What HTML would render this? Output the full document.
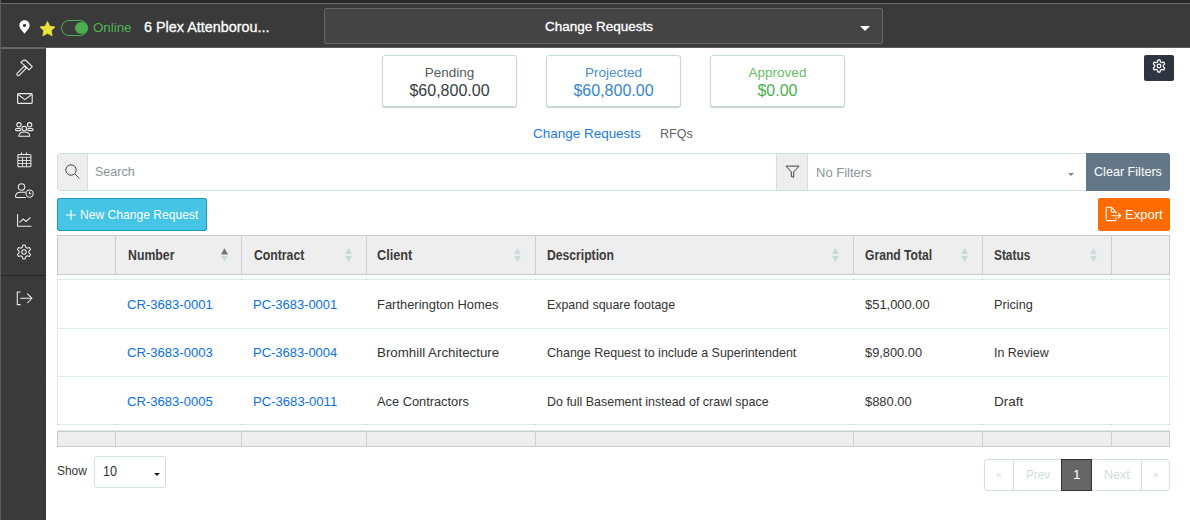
<!DOCTYPE html>
<html><head><meta charset="utf-8">
<style>
*{box-sizing:border-box;margin:0;padding:0}
html,body{width:1190px;height:520px;overflow:hidden;background:#fff;font-family:"Liberation Sans",sans-serif;position:relative}
.a{position:absolute}
.t{position:absolute;line-height:1;white-space:nowrap;transform-origin:0 0}
svg{position:absolute;overflow:visible}
.card{position:absolute;top:55px;width:135px;height:52px;border:1px solid #c2dcdd;border-radius:3px;box-shadow:0 1px 1px rgba(0,0,0,.2);background:#fff}
.card .l{position:absolute;left:0;right:0;text-align:center;font-size:13.5px;line-height:1;top:10px}
.card .v{position:absolute;left:0;right:0;text-align:center;font-size:16px;line-height:1;top:27px}
.th{position:absolute;top:0;height:39px;border-left:1px solid #cfcfcf}
.hd{font-weight:bold;font-size:12.3px;color:#333;top:250px}
.cell{font-size:13px;color:#333}
.lnk{color:#1f7ad8}
.sort{position:absolute;width:7px;height:16px}
</style></head><body>

<!-- top header -->
<div class="a" style="left:0;top:0;width:1190px;height:3px;background:#282828"></div>
<div class="a" style="left:0;top:3px;width:1190px;height:1px;background:#6a6a6a"></div>
<div class="a" style="left:0;top:4px;width:1190px;height:43px;background:#3a3a3a;border-bottom:1px solid #363636"></div>
<div class="a" style="left:0;top:47px;width:1190px;height:1px;background:#5c5c5c"></div>

<!-- pin -->
<svg style="left:19px;top:20px" width="11" height="14" viewBox="0 0 11 14">
  <path d="M5.5 0.3C2.6 0.3 0.4 2.5 0.4 5.3c0 3 3.2 6.2 5.1 8.5c1.9-2.3 5.1-5.5 5.1-8.5C10.6 2.5 8.4 0.3 5.5 0.3z" fill="#fff"/>
  <circle cx="5.5" cy="5.4" r="1.6" fill="#3a3a3a"/>
</svg>
<!-- star -->
<svg style="left:40px;top:21px" width="15" height="15" viewBox="0 0 15 15">
  <path d="M7.50 0.50L9.79 5.24L15.01 5.96L11.21 9.61L12.14 14.79L7.50 12.30L2.86 14.79L3.79 9.61L-0.01 5.96L5.21 5.24z" fill="#ede23c" stroke="#ede23c" stroke-width="0.8" stroke-linejoin="round"/>
</svg>
<!-- toggle -->
<div class="a" style="left:61px;top:20px;width:27px;height:16px;border:1px solid #4cae4f;border-radius:8px"></div>
<div class="a" style="left:75px;top:22px;width:13px;height:12px;border-radius:50%;background:#4cae4f"></div>
<div class="t" style="left:93px;top:21px;font-size:13.3px;color:#4fb552">Online</div>
<div class="t" style="left:144px;top:20px;font-size:14.4px;color:#fff;-webkit-text-stroke:0.3px #fff">6 Plex Attenborou...</div>

<!-- dropdown -->
<div class="a" style="left:324px;top:8px;width:559px;height:36px;background:#444;border:1px solid #666;border-radius:2px"></div>
<div class="t" style="left:545px;top:20px;font-size:13.5px;color:#fff;-webkit-text-stroke:0.3px #fff">Change Requests</div>
<svg style="left:860px;top:26px" width="10" height="5" viewBox="0 0 10 5"><path d="M0 0H10L5 5z" fill="#fff"/></svg>

<!-- sidebar -->
<div class="a" style="left:0;top:47px;width:46px;height:473px;background:#3a3a3a;border-top:2px solid #676767;border-right:1px solid #363636"></div>
<div class="a" style="left:1px;top:275px;width:44px;height:1px;background:#262626"></div>

<!-- sidebar icons -->
<svg style="left:16px;top:59px" width="17" height="17" viewBox="0 0 17 17" fill="none" stroke="#eee" stroke-width="1.1" stroke-linejoin="round">
  <path d="M1.2 14.3L8.3 7.2 10.3 9.2 3.2 16.3C2.7 16.8 1.9 16.8 1.4 16.3L1.2 16.1C.7 15.6.7 14.8 1.2 14.3z"/>
  <path d="M4.9 3.3L7.2 1.5C8.4 .9 9.6 1.1 10.5 2L16.3 7.7 13.1 10.9 9.6 7.4z"/>
</svg>
<svg style="left:17px;top:93px" width="16" height="11" viewBox="0 0 16 11" fill="none" stroke="#eee" stroke-width="1.1">
  <rect x="0.6" y="0.6" width="14.6" height="9.8" rx="1"/>
  <path d="M0.8 1.2L7.9 6.6 15 1.2"/>
</svg>
<svg style="left:14px;top:120px" width="21" height="18" viewBox="0 0 21 18" fill="none" stroke="#eee" stroke-width="1.05">
  <circle cx="5" cy="4.8" r="2.2"/><circle cx="15.6" cy="4.8" r="2.2"/><circle cx="10.3" cy="8.6" r="2.3"/>
  <rect x="1.5" y="8.4" width="5.4" height="2.2" rx="1.1"/>
  <rect x="13.7" y="8.4" width="5.4" height="2.2" rx="1.1"/>
  <path d="M4.9 16.2C4.9 13.3 7.3 12 10.3 12S15.7 13.3 15.7 16.2z"/>
</svg>
<svg style="left:17px;top:152px" width="15" height="16" viewBox="0 0 15 16" fill="none" stroke="#eee" stroke-width="1.05">
  <rect x="0.9" y="2.4" width="13" height="12.4" rx="1"/>
  <path d="M0.9 5.3h13M0.9 8.5h13M0.9 11.5h13M5.5 5.3v9.5M9.5 5.3v9.5" stroke-width="0.85"/><path d="M4.5 0.5v2.8M9.5 0.5v2.8"/>
</svg>
<svg style="left:14px;top:182px" width="20" height="17" viewBox="0 0 20 17" fill="none" stroke="#eee" stroke-width="1.05">
  <circle cx="7.5" cy="5" r="3.3"/>
  <path d="M12 15.4H2.4C1.7 15.4 1.3 14.8 1.5 14.1 2.1 11.6 3.8 10.3 6 10.3H11.8"/>
  <circle cx="15.6" cy="11.6" r="3.6"/>
  <path d="M15.5 9.6V11.8H17.2"/>
</svg>
<svg style="left:16px;top:213px" width="17" height="15" viewBox="0 0 17 15" fill="none" stroke="#eee" stroke-width="1.05">
  <path d="M1.6 1V13.3H15.5"/>
  <path d="M3.5 9.3L7.3 6 10.1 8.5 14.5 4.3"/>
</svg>
<svg style="left:16px;top:244px" width="16" height="16" viewBox="0 0 16 16" fill="none" stroke="#eee" stroke-width="1.05" stroke-linejoin="round">
  <path d="M6.16 3.46L6.90 1.09L9.10 1.09L9.84 3.46A4.90 4.90 0 0 1 11.02 4.14L13.44 3.59L14.54 5.49L12.85 7.32A4.90 4.90 0 0 1 12.85 8.68L14.54 10.51L13.44 12.41L11.02 11.86A4.90 4.90 0 0 1 9.84 12.54L9.10 14.91L6.90 14.91L6.16 12.54A4.90 4.90 0 0 1 4.98 11.86L2.56 12.41L1.46 10.51L3.15 8.68A4.90 4.90 0 0 1 3.15 7.32L1.46 5.49L2.56 3.59L4.98 4.14A4.90 4.90 0 0 1 6.16 3.46z"/>
  <circle cx="8" cy="8" r="2.2"/>
</svg>
<svg style="left:16px;top:291px" width="17" height="15" viewBox="0 0 17 15" fill="none" stroke="#eee" stroke-width="1.05">
  <path d="M4.6 0.9H1.3V13.6H4.6"/>
  <path d="M4.3 7.3H15.6M11.3 2.6L15.9 7.3 11.3 12"/>
</svg>

<!-- gear button -->
<div class="a" style="left:1144px;top:55px;width:30px;height:26px;background:#2e3540;border-radius:2px"></div>
<svg style="left:1152px;top:59px" width="14" height="14" viewBox="0 0 16 16" fill="none" stroke="#fff" stroke-width="1.4" stroke-linejoin="round">
  <path d="M6.16 3.46L6.90 1.09L9.10 1.09L9.84 3.46A4.90 4.90 0 0 1 11.02 4.14L13.44 3.59L14.54 5.49L12.85 7.32A4.90 4.90 0 0 1 12.85 8.68L14.54 10.51L13.44 12.41L11.02 11.86A4.90 4.90 0 0 1 9.84 12.54L9.10 14.91L6.90 14.91L6.16 12.54A4.90 4.90 0 0 1 4.98 11.86L2.56 12.41L1.46 10.51L3.15 8.68A4.90 4.90 0 0 1 3.15 7.32L1.46 5.49L2.56 3.59L4.98 4.14A4.90 4.90 0 0 1 6.16 3.46z"/>
  <circle cx="8" cy="8" r="2.1"/>
</svg>

<!-- cards -->
<div class="card" style="left:382px"><div class="l" style="color:#525b60">Pending</div><div class="v" style="color:#363d42">$60,800.00</div></div>
<div class="card" style="left:546px"><div class="l" style="color:#4a90d0">Projected</div><div class="v" style="color:#3686c8">$60,800.00</div></div>
<div class="card" style="left:710px"><div class="l" style="color:#66bd66">Approved</div><div class="v" style="color:#4cb04e">$0.00</div></div>

<!-- tabs -->
<div class="t" style="left:532.80px;top:127px;font-size:13.50px;color:#1a7be6;transform:scaleX(0.9977)">Change Requests</div>
<div class="t" style="left:660.20px;top:127px;font-size:13.50px;color:#626262;transform:scaleX(0.9277)">RFQs</div>

<!-- search bar -->
<div class="a" style="left:57px;top:153px;width:1030px;height:38px;border:1px solid #cfe1e1;border-radius:3px 0 0 3px;background:#fff"></div>
<div class="a" style="left:58px;top:154px;width:30px;height:36px;background:#eee;border-right:1px solid #cfe1e1"></div>
<svg style="left:65px;top:164px" width="15" height="15" viewBox="0 0 15 15" fill="none" stroke="#4a4a4a" stroke-width="1">
  <circle cx="6" cy="6" r="5.2"/><path d="M9.8 9.8l4.5 4.5"/>
</svg>
<div class="t" style="left:95px;top:166px;font-size:12.5px;color:#869494">Search</div>
<div class="a" style="left:776px;top:154px;width:32px;height:36px;background:#eee;border-left:1px solid #cfe1e1;border-right:1px solid #cfe1e1"></div>
<svg style="left:785px;top:165px" width="15" height="14" viewBox="0 0 15 14" fill="none" stroke="#444" stroke-width="1" stroke-linejoin="round">
  <path d="M0.9 1.1H14.1L8.7 6.9V12.3L6.3 11.6V6.9Z"/>
</svg>
<div class="t" style="left:816px;top:166px;font-size:13px;color:#8c9696">No Filters</div>
<svg style="left:1068px;top:173px" width="6" height="3" viewBox="0 0 6 3"><path d="M0 0H6L3 3z" fill="#888"/></svg>
<div class="a" style="left:1086px;top:153px;width:84px;height:38px;background:#637789;border-radius:0 3px 3px 0"></div>
<div class="t" style="left:1094px;top:166px;font-size:12.6px;color:#fff">Clear Filters</div>

<!-- buttons -->
<div class="a" style="left:57px;top:198px;width:150px;height:33px;background:#45c4e6;border:1px solid #1d9ac0;border-radius:2px"></div>
<svg style="left:66px;top:210px" width="10" height="10" viewBox="0 0 10 10"><path d="M5 0V10M0 5H10" stroke="#fff" stroke-width="1.15"/></svg>
<div class="t" style="left:80px;top:209px;font-size:12.1px;color:#fff">New Change Request</div>
<div class="a" style="left:1098px;top:198px;width:72px;height:33px;background:#ff6b00;border-radius:2px"></div>
<svg style="left:1105px;top:206px" width="17" height="16" viewBox="0 0 17 16" fill="none" stroke="#fff" stroke-width="1.1" stroke-linejoin="round">
  <path d="M11 7.6V6.1L6.3 1.2H2.3C1.7 1.2 1.2 1.7 1.2 2.3V13.5C1.2 14.1 1.7 14.6 2.3 14.6H9.9C10.5 14.6 11 14.1 11 13.5V11.6"/>
  <path d="M6.3 1.2V5.1C6.3 5.7 6.7 6.1 7.3 6.1H11"/>
  <path d="M6.3 9.7H15.8M13.1 7L15.8 9.7 13.1 12.4"/>
</svg>
<div class="t" style="left:1125px;top:208px;font-size:13px;color:#fff">Export</div>

<!-- table header -->
<div class="a" style="left:57px;top:235px;width:1113px;height:40px;background:#eee;border:1px solid #cbcbcb"></div>
<div class="a" style="left:115px;top:236px;width:1px;height:38px;background:#cfcfcf"></div>
<div class="a" style="left:241px;top:236px;width:1px;height:38px;background:#cfcfcf"></div>
<div class="a" style="left:366px;top:236px;width:1px;height:38px;background:#cfcfcf"></div>
<div class="a" style="left:535px;top:236px;width:1px;height:38px;background:#cfcfcf"></div>
<div class="a" style="left:853px;top:236px;width:1px;height:38px;background:#cfcfcf"></div>
<div class="a" style="left:982px;top:236px;width:1px;height:38px;background:#cfcfcf"></div>
<div class="a" style="left:1111px;top:236px;width:1px;height:38px;background:#cfcfcf"></div>

<div class="t" style="left:127.80px;top:248px;font-size:14.00px;color:#3b3b3b;transform:scaleX(0.8790);font-weight:bold">Number</div>
<div class="t" style="left:253.70px;top:248px;font-size:14.00px;color:#3b3b3b;transform:scaleX(0.8740);font-weight:bold">Contract</div>
<div class="t" style="left:377.40px;top:248px;font-size:14.00px;color:#3b3b3b;transform:scaleX(0.9049);font-weight:bold">Client</div>
<div class="t" style="left:546.90px;top:248px;font-size:14.00px;color:#3b3b3b;transform:scaleX(0.8688);font-weight:bold">Description</div>
<div class="t" style="left:864.90px;top:248px;font-size:14.00px;color:#3b3b3b;transform:scaleX(0.8658);font-weight:bold">Grand Total</div>
<div class="t" style="left:993.70px;top:248px;font-size:14.00px;color:#3b3b3b;transform:scaleX(0.8481);font-weight:bold">Status</div>

<svg style="left:221px;top:248px" width="7" height="14" viewBox="0 0 7 14"><path d="M0 6.5L3.5 0.3 7 6.5z" fill="#747474"/><path d="M0 8L3.5 14 7 8z" fill="#c9dcdc"/></svg>
<svg style="left:345px;top:248px" width="7" height="14" viewBox="0 0 7 14"><path d="M0 6L3.5 0 7 6z" fill="#c9dcdc"/><path d="M0 8L3.5 14 7 8z" fill="#c9dcdc"/></svg>
<svg style="left:514px;top:248px" width="7" height="14" viewBox="0 0 7 14"><path d="M0 6L3.5 0 7 6z" fill="#c9dcdc"/><path d="M0 8L3.5 14 7 8z" fill="#c9dcdc"/></svg>
<svg style="left:832px;top:248px" width="7" height="14" viewBox="0 0 7 14"><path d="M0 6L3.5 0 7 6z" fill="#c9dcdc"/><path d="M0 8L3.5 14 7 8z" fill="#c9dcdc"/></svg>
<svg style="left:961px;top:248px" width="7" height="14" viewBox="0 0 7 14"><path d="M0 6L3.5 0 7 6z" fill="#c9dcdc"/><path d="M0 8L3.5 14 7 8z" fill="#c9dcdc"/></svg>
<svg style="left:1090px;top:248px" width="7" height="14" viewBox="0 0 7 14"><path d="M0 6L3.5 0 7 6z" fill="#c9dcdc"/><path d="M0 8L3.5 14 7 8z" fill="#c9dcdc"/></svg>

<!-- table body -->
<div class="a" style="left:57px;top:279px;width:1113px;height:146px;border:1px solid #dcece6;border-top-color:#dcece6"></div>
<div class="a" style="left:58px;top:328px;width:1111px;height:1px;background:#dcece6"></div>
<div class="a" style="left:58px;top:376px;width:1111px;height:1px;background:#dcece6"></div>

<div class="a" style="left:115px;top:279px;width:1px;height:1px;background:#c8c8c8"></div><div class="a" style="left:115px;top:424px;width:1px;height:1px;background:#c8c8c8"></div><div class="a" style="left:241px;top:279px;width:1px;height:1px;background:#c8c8c8"></div><div class="a" style="left:241px;top:424px;width:1px;height:1px;background:#c8c8c8"></div><div class="a" style="left:366px;top:279px;width:1px;height:1px;background:#c8c8c8"></div><div class="a" style="left:366px;top:424px;width:1px;height:1px;background:#c8c8c8"></div><div class="a" style="left:535px;top:279px;width:1px;height:1px;background:#c8c8c8"></div><div class="a" style="left:535px;top:424px;width:1px;height:1px;background:#c8c8c8"></div><div class="a" style="left:853px;top:279px;width:1px;height:1px;background:#c8c8c8"></div><div class="a" style="left:853px;top:424px;width:1px;height:1px;background:#c8c8c8"></div><div class="a" style="left:982px;top:279px;width:1px;height:1px;background:#c8c8c8"></div><div class="a" style="left:982px;top:424px;width:1px;height:1px;background:#c8c8c8"></div><div class="a" style="left:1111px;top:279px;width:1px;height:1px;background:#c8c8c8"></div><div class="a" style="left:1111px;top:424px;width:1px;height:1px;background:#c8c8c8"></div>
<div class="a" style="left:57px;top:430px;width:1113px;height:1px;background:#dcece6"></div>
<div class="t" style="left:126.80px;top:298px;font-size:13.50px;color:#0d70e6;transform:scaleX(0.9689)">CR-3683-0001</div>
<div class="t" style="left:253.00px;top:298px;font-size:13.50px;color:#0d70e6;transform:scaleX(0.9590)">PC-3683-0001</div>
<div class="t" style="left:377.40px;top:298px;font-size:13.50px;color:#333;transform:scaleX(0.9574)">Fartherington Homes</div>
<div class="t" style="left:546.90px;top:298px;font-size:13.50px;color:#333;transform:scaleX(0.9176)">Expand square footage</div>
<div class="t" style="left:864.90px;top:298px;font-size:13.50px;color:#333;transform:scaleX(0.9578)">$51,000.00</div>
<div class="t" style="left:993.70px;top:298px;font-size:13.50px;color:#333;transform:scaleX(0.9406)">Pricing</div>
<div class="t" style="left:126.80px;top:346px;font-size:13.50px;color:#0d70e6;transform:scaleX(0.9689)">CR-3683-0003</div>
<div class="t" style="left:253.00px;top:346px;font-size:13.50px;color:#0d70e6;transform:scaleX(0.9590)">PC-3683-0004</div>
<div class="t" style="left:377.40px;top:346px;font-size:13.50px;color:#333;transform:scaleX(0.9871)">Bromhill Architecture</div>
<div class="t" style="left:546.90px;top:346px;font-size:13.50px;color:#333;transform:scaleX(0.9252)">Change Request to include a Superintendent</div>
<div class="t" style="left:864.90px;top:346px;font-size:13.50px;color:#333;transform:scaleX(0.9509)">$9,800.00</div>
<div class="t" style="left:993.70px;top:346px;font-size:13.50px;color:#333;transform:scaleX(0.9224)">In Review</div>
<div class="t" style="left:126.80px;top:395px;font-size:13.50px;color:#0d70e6;transform:scaleX(0.9689)">CR-3683-0005</div>
<div class="t" style="left:253.00px;top:395px;font-size:13.50px;color:#0d70e6;transform:scaleX(0.9700)">PC-3683-0011</div>
<div class="t" style="left:377.40px;top:395px;font-size:13.50px;color:#333;transform:scaleX(0.9494)">Ace Contractors</div>
<div class="t" style="left:546.90px;top:395px;font-size:13.50px;color:#333;transform:scaleX(0.9229)">Do full Basement instead of crawl space</div>
<div class="t" style="left:864.90px;top:395px;font-size:13.50px;color:#333;transform:scaleX(0.9570)">$880.00</div>
<div class="t" style="left:993.70px;top:395px;font-size:13.50px;color:#333;transform:scaleX(1.0017)">Draft</div>



<!-- table footer -->
<div class="a" style="left:57px;top:431px;width:1113px;height:16px;background:#eee;border:1px solid #cbcbcb"></div>
<div class="a" style="left:115px;top:432px;width:1px;height:14px;background:#cfcfcf"></div>
<div class="a" style="left:241px;top:432px;width:1px;height:14px;background:#cfcfcf"></div>
<div class="a" style="left:366px;top:432px;width:1px;height:14px;background:#cfcfcf"></div>
<div class="a" style="left:535px;top:432px;width:1px;height:14px;background:#cfcfcf"></div>
<div class="a" style="left:853px;top:432px;width:1px;height:14px;background:#cfcfcf"></div>
<div class="a" style="left:982px;top:432px;width:1px;height:14px;background:#cfcfcf"></div>
<div class="a" style="left:1111px;top:432px;width:1px;height:14px;background:#cfcfcf"></div>

<!-- show -->
<div class="t" style="left:57.10px;top:464px;font-size:13.50px;color:#333;transform:scaleX(0.8817)">Show</div>
<div class="a" style="left:94px;top:456px;width:72px;height:32px;border:1px solid #cfe1e1;border-radius:2px"></div>
<div class="t" style="left:103.30px;top:464px;font-size:14.00px;color:#333;transform:scaleX(0.9003)">10</div>
<svg style="left:154px;top:473px" width="6" height="3" viewBox="0 0 6 3"><path d="M0 0H6L3 3z" fill="#222"/></svg>

<!-- pagination -->
<div class="a" style="left:984px;top:459px;width:186px;height:32px;border:1px solid #cfe1e1;border-radius:3px"></div>
<div class="a" style="left:1013px;top:460px;width:1px;height:30px;background:#cfe1e1"></div>
<div class="a" style="left:1141px;top:460px;width:1px;height:30px;background:#cfe1e1"></div>
<div class="a" style="left:1061px;top:459px;width:31px;height:32px;background:#666;border:1px solid #333"></div>
<div class="t" style="left:996px;top:470px;font-size:10px;color:#cde0da">&laquo;</div>
<div class="t" style="left:1025.90px;top:468px;font-size:13.50px;color:#cde0da;transform:scaleX(0.8685)">Prev</div>
<div class="t" style="left:1073px;top:468px;font-size:13.5px;color:#fff">1</div>
<div class="t" style="left:1103.50px;top:468px;font-size:13.50px;color:#cde0da;transform:scaleX(0.9297)">Next</div>
<div class="t" style="left:1153px;top:470px;font-size:10px;color:#cde0da">&raquo;</div>

<div class="a" style="left:0;top:0;width:1px;height:520px;background:#5c5c5c"></div>
<div class="a" style="left:57px;top:279px;width:1px;height:1px;background:#c8c8c8"></div><div class="a" style="left:57px;top:424px;width:1px;height:1px;background:#c8c8c8"></div><div class="a" style="left:1169px;top:279px;width:1px;height:1px;background:#c8c8c8"></div><div class="a" style="left:1169px;top:424px;width:1px;height:1px;background:#c8c8c8"></div>
</body></html>
